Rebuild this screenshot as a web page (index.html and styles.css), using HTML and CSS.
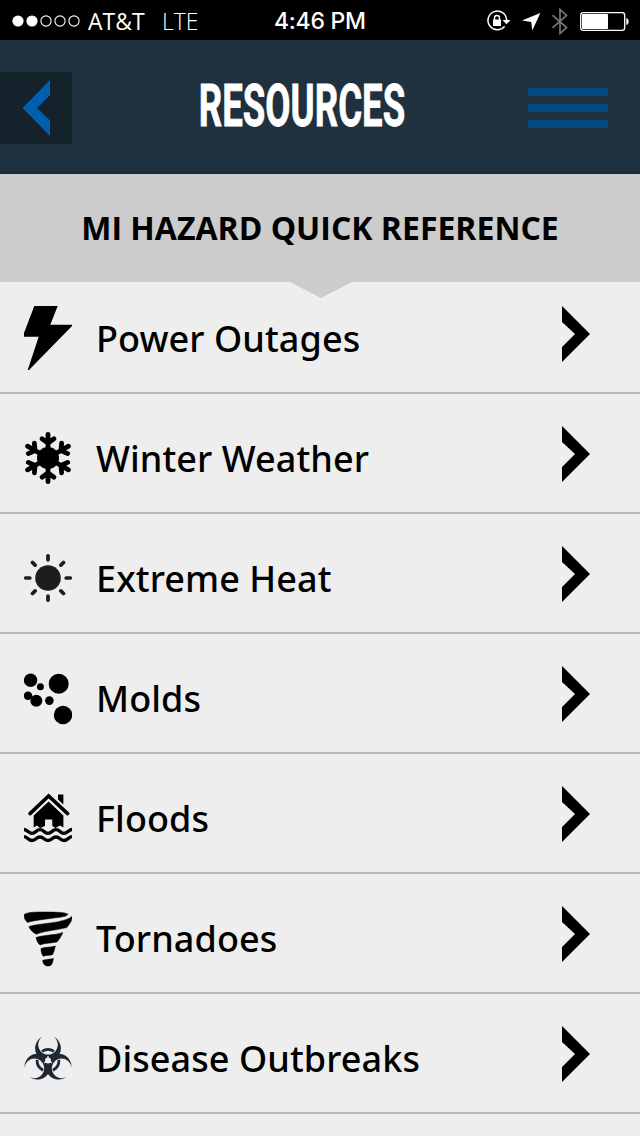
FILE: index.html
```html
<!DOCTYPE html>
<html lang="en">
<head>
<meta charset="utf-8">
<title>Resources</title>
<link rel="stylesheet" href="styles.css">
</head>
<body>
<div class="status">
  <div class="status-left">
    <svg class="signal" width="68" height="14" viewBox="0 0 68 14"><g fill="#fff"><circle cx="6" cy="7" r="5.6"/><circle cx="20" cy="7" r="5.6"/></g><g fill="none" stroke="#fff" stroke-width="1.1"><circle cx="34" cy="7" r="5.1"/><circle cx="48" cy="7" r="5.1"/><circle cx="62" cy="7" r="5.1"/></g></svg>
    <span class="carrier">AT&amp;T</span>
    <span class="network">LTE</span>
  </div>
  <span class="clock">4:46 PM</span>
  <svg class="indicators" width="144" height="40" viewBox="486 0 144 40">
    <path d="M504.6 25.2A9.3 9.3 0 1 1 506.6 19" fill="none" stroke="#fff" stroke-width="1.5"/>
    <path d="M502.5 19h8l-4 4.2z" fill="#fff"/>
    <rect x="493" y="18.5" width="8" height="6.5" fill="#fff"/>
    <path d="M494.5 19v-2a2.5 2.5 0 0 1 5 0v2" fill="none" stroke="#fff" stroke-width="1.4"/>
    <path d="M540.3 12L532.3 29.6L531.2 21L522 19.4z" fill="#fff"/>
    <path d="M552.5 14.2L566.5 26.5L560 32.5V8.5L566.5 14.5L552.5 26.8" fill="none" stroke="#777" stroke-width="1.7"/>
    <rect x="580.7" y="11.7" width="44" height="17.6" rx="2.6" fill="none" stroke="#fff" stroke-width="1.3"/>
    <rect x="582" y="13" width="26" height="15" rx="1" fill="#fff"/>
    <path d="M626.3 17c3.2 1 3.2 6 0 7z" fill="#fff"/>
  </svg>
</div>
<header class="header">
  <div class="back"><svg width="28" height="56" viewBox="0 0 28 56"><path d="M28 0L.5 28L28 56V40.5L15 28L28 15z" fill="#0060b0"/></svg></div>
  <h1 class="title"><span class="title-text">RESOURCES</span></h1>
  <div class="menu"><i class="bar"></i><i class="bar"></i><i class="bar"></i></div>
</header>
<div class="section">MI HAZARD QUICK REFERENCE<svg class="notch" width="62" height="16" viewBox="0 0 62 16"><path d="M0 0H62L31 16z" fill="#ccc"/></svg></div>
<svg class="defs" width="0" height="0"><defs>
  <path id="chev" d="M0 0L28 28L0 56V41L13 28L0 16z"/>
  <g id="arm"><path d="M24 32V8.3M18 12.8L24 17L30 12.8" fill="none" stroke="#000" stroke-width="4.8" stroke-linecap="round"/></g>
  <path id="horn" d="M18.7 10.5A12.9 12.9 0 1 0 29.3 10.5A9.8 9.8 0 1 1 18.7 10.5z"/>
</defs></svg>
<main class="list">
  <div class="row first">
    <svg class="icon" viewBox="0 0 48 64"><path d="M10.3 0H33.7L26.3 18.7H48V20L5 64H3.7L14.7 30.8H0V27z"/></svg>
    <span class="label">Power Outages</span><svg class="chevron" viewBox="0 0 28 56"><use href="#chev"/></svg>
  </div>
  <div class="row">
    <svg class="icon" viewBox="0 0 48 64"><use href="#arm"/><use href="#arm" transform="rotate(60 24 32)"/><use href="#arm" transform="rotate(120 24 32)"/><use href="#arm" transform="rotate(180 24 32)"/><use href="#arm" transform="rotate(240 24 32)"/><use href="#arm" transform="rotate(300 24 32)"/><circle cx="24" cy="32" r="11"/></svg>
    <span class="label">Winter Weather</span><svg class="chevron" viewBox="0 0 28 56"><use href="#chev"/></svg>
  </div>
  <div class="row">
    <svg class="icon" viewBox="0 0 48 64"><circle cx="24" cy="32" r="12.8" fill="#1d1d1b"/><path d="M24 9.8v4M24 50.2v4M1.8 32h4M42.2 32h4M8.5 16.5l2.6 2.6M39.5 16.5l-2.6 2.6M8.5 47.5l2.6-2.6M39.5 47.5l-2.6-2.6" stroke="#1d1d1b" stroke-width="3.7" stroke-linecap="round"/></svg>
    <span class="label">Extreme Heat</span><svg class="chevron" viewBox="0 0 28 56"><use href="#chev"/></svg>
  </div>
  <div class="row">
    <svg class="icon" viewBox="0 0 48 64"><circle cx="6.6" cy="14.3" r="6.7"/><circle cx="16.4" cy="20.8" r="3.5"/><circle cx="34.7" cy="17.7" r="10"/><circle cx="4" cy="29.7" r="4.3"/><circle cx="12.3" cy="34.7" r="6"/><circle cx="25.4" cy="34.6" r="4.3"/><circle cx="39" cy="49" r="9.2"/></svg>
    <span class="label">Molds</span><svg class="chevron" viewBox="0 0 28 56"><use href="#chev"/></svg>
  </div>
  <div class="row">
    <svg class="icon" viewBox="0 0 48 64"><path d="M34 8.6h5.4v10L34 13.4z"/><path d="M6 27.6L24.6 10L43.6 27.6" fill="none" stroke="#000" stroke-width="3.6" stroke-linecap="round"/><path d="M24.6 15.5L39.4 29.5V41.5L36 39.5L31.5 42L28.3 40V33.6H21V40L16 42L13 39.6L9.7 41.5V29.5z"/><path d="M-1 43.4C4 43.4 4 47.3 8 47.3S12 43.7 16 43.7S20 47.3 24 47.3S28 43.7 32 43.7S36 47.3 40 47.3S44 43.4 49 43.4M-1 50.5C4 50.5 4 54.5 8 54.5S12 51 16 51S20 54.5 24 54.5S28 51 32 51S36 54.5 40 54.5S44 50.5 49 50.5" fill="none" stroke="#000" stroke-width="3.3"/></svg>
    <span class="label">Floods</span><svg class="chevron" viewBox="0 0 28 56"><use href="#chev"/></svg>
  </div>
  <div class="row">
    <svg class="icon" viewBox="0 0 48 64"><path d="M0 8.8C3 6 10 6 22 6C34 6 42 6.6 44 8.3C43 10.5 38 11 28 12.3C18 13.6 9 14.6 3.5 16.6C1 14 0 12 0 8.8zM4.8 20.6C14 17 40 17.5 48 10.4C48.5 15 45 18.5 42.8 21.6C34 24 20 25 12.3 28.2C8.5 26.5 6.5 24 4.8 20.6zM12 31.5C20 28.5 31 29.5 38.8 26.5C37.5 30 35.5 33.3 33 36C27 37.2 21 37 16 39C14 37.5 12.5 34.5 12 31.5zM17 42.5C22 40.7 27 41.5 31.4 40C30.5 43 30 46.5 28.5 48.7C25 49.6 22 49.2 19.3 50.3C17.5 48 17 45.5 17 42.5zM18.8 54.2C22.5 53 26 53.5 29.4 52.4C29 55 28.6 57.5 27 59.2C24.5 60.4 22 60.3 20.6 59C19.2 57.5 18.6 56 18.8 54.2z" stroke="#000" stroke-width=".5"/></svg>
    <span class="label">Tornadoes</span><svg class="chevron" viewBox="0 0 28 56"><use href="#chev"/></svg>
  </div>
  <div class="row">
    <svg class="icon" viewBox="0 0 48 64"><g fill="#1e2833"><use href="#horn"/><use href="#horn" transform="rotate(120 24 34.5)"/><use href="#horn" transform="rotate(240 24 34.5)"/></g><g fill="none" stroke="#1e2833" stroke-width="2.8"><path id="ring" d="M18 25.4A11 11 0 0 1 30 25.4"/><use href="#ring" transform="rotate(120 24 34.5)"/><use href="#ring" transform="rotate(240 24 34.5)"/></g><path d="M24 34.5V30M24 34.5L20 37M24 34.5L28 37" fill="none" stroke="#eee" stroke-width="1.2"/><circle cx="24" cy="34.5" r="3" fill="#eee"/></svg>
    <span class="label">Disease Outbreaks</span><svg class="chevron" viewBox="0 0 28 56"><use href="#chev"/></svg>
  </div>
</main>
</body>
</html>
```
FILE: styles.css
```css
* { box-sizing: border-box; }
body { margin: 0; width: 640px; height: 1136px; overflow: hidden; background: #eee; color: #000; font-family: "Open Sans", "Noto Sans", sans-serif; }
svg { display: block; }
.defs { position: absolute; }
.status { height: 40px; padding: 0 10px 0 12px; background: #000; color: #fff; display: grid; grid-template-columns: 262px 1fr 144px; align-items: center; }
.status-left { display: flex; align-items: center; font-size: 23px; line-height: 40px; }
.signal { margin-right: 8px; margin-top: 1px; }
.carrier { width: 74px; font-weight: 400; white-space: nowrap; }
.network { font-weight: 300; }
.clock { font-family: Inter, "Liberation Sans", sans-serif; font-size: 23px; font-weight: 500; letter-spacing: -.25px; line-height: 40px; padding-top: 1px; white-space: nowrap; }
.header { height: 134px; background: #1f303f; border-bottom: 1px solid #1b2937; display: grid; grid-template-columns: 72px 1fr 80px; align-items: center; padding: 3px 32px 0 0; }
.back { width: 72px; height: 72px; background: #14222b; display: flex; align-items: center; padding-left: 22px; }
.title { margin: 0; height: 72px; display: flex; justify-content: center; padding-left: 3px; }
.title-text { font-family: Roboto, "Liberation Sans", sans-serif; font-size: 59px; line-height: 68px; font-weight: 700; color: #fff; width: 206px; display: flex; justify-content: center; transform: scaleX(.62); -webkit-text-stroke: .8px #fff; }
.menu { display: flex; flex-direction: column; gap: 8px; }
.bar { height: 8px; background: #064a85; }
.section { position: relative; height: 108px; background: #ccc; text-align: center; font-size: 32px; font-weight: 700; line-height: 108px; white-space: nowrap; }
.notch { position: absolute; left: 290px; top: 108px; }
.row { height: 120px; border-bottom: 2px solid #b9b9b9; padding: 32px 50px 0 24px; display: flex; align-items: flex-start; }
.first { height: 112px; padding-top: 24px; }
.icon { width: 48px; height: 64px; flex: none; }
.label { flex: 1; margin-left: 24px; font-family: "Noto Sans", "Open Sans", sans-serif; font-size: 36px; font-weight: 500; letter-spacing: .08px; line-height: 66px; white-space: nowrap; }
.chevron { width: 28px; height: 56px; flex: none; }
```
